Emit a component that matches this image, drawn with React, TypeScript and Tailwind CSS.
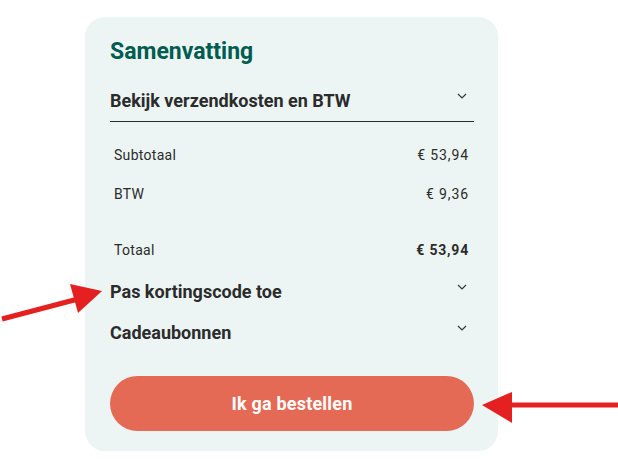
import React from 'react';

const Chevron = () => (
  <svg width="10" height="6" viewBox="0 0 10 6" fill="none" className="mt-[4px]">
    <path d="M1 1l4 4 4-4" stroke="#2d3a40" strokeWidth="1.2" />
  </svg>
);

const Row = ({ label, value, bold }: { label: string; value: string; bold?: boolean }) => (
  <div className="flex justify-between items-center px-1 pr-[5px] text-[14px] leading-[20px] text-[#2b2b2b] tracking-[0.3px]">
    <span>{label}</span>
    <span className={bold ? 'font-bold tracking-[0.8px]' : 'tracking-[0.9px]'}>{value}</span>
  </div>
);

export default function App() {
  return (
    <div className="relative w-[618px] h-[470px] bg-white overflow-hidden" style={{ fontFamily: 'Roboto, "Liberation Sans", sans-serif' }}>
      <div className="ml-[85px] mt-[17px] w-[413px] h-[434px] rounded-[20px] bg-[#ecf5f4] pl-[25px] pr-[24px] pt-[21px]">
        <h2 className="text-[23px] leading-[28px] font-bold text-[#005b50]">Samenvatting</h2>

        <div className="mt-[23px] flex justify-between items-start border-b border-[#2b2b2b] pb-[8px] pr-[7px]">
          <span className="text-[18px] leading-[24px] font-bold text-[#2b2b2b]">Bekijk verzendkosten en BTW</span>
          <Chevron />
        </div>

        <div className="mt-[23px]">
          <Row label="Subtotaal" value="€ 53,94" />
          <div className="mt-[19px]">
            <Row label="BTW" value="€ 9,36" />
          </div>
          <div className="mt-[36px]">
            <Row label="Totaal" value="€ 53,94" bold />
          </div>
        </div>

        <div className="mt-[20px] flex justify-between items-start pr-[7px]">
          <span className="text-[18px] leading-[24px] font-bold text-[#2b2b2b]">Pas kortingscode toe</span>
          <Chevron />
        </div>
        <div className="mt-[17px] flex justify-between items-start pr-[7px]">
          <span className="text-[18px] leading-[24px] font-bold text-[#2b2b2b]">Cadeaubonnen</span>
          <Chevron />
        </div>

        <button className="mt-[31px] w-full h-[55px] rounded-full bg-[#e46a55] text-white text-[18px] font-bold tracking-[0.2px]">
          Ik ga bestellen
        </button>
      </div>

      <svg className="absolute left-0 top-0 pointer-events-none" width="618" height="470" viewBox="0 0 618 470">
        <line x1="2" y1="319" x2="78" y2="299" stroke="#e42020" strokeWidth="5" />
        <polygon points="102,291 70,284 78,313" fill="#e42020" />
        <line x1="618" y1="405" x2="508" y2="405" stroke="#e42020" strokeWidth="5" />
        <polygon points="482,405 512,392 512,423" fill="#e42020" />
      </svg>
    </div>
  );
}
